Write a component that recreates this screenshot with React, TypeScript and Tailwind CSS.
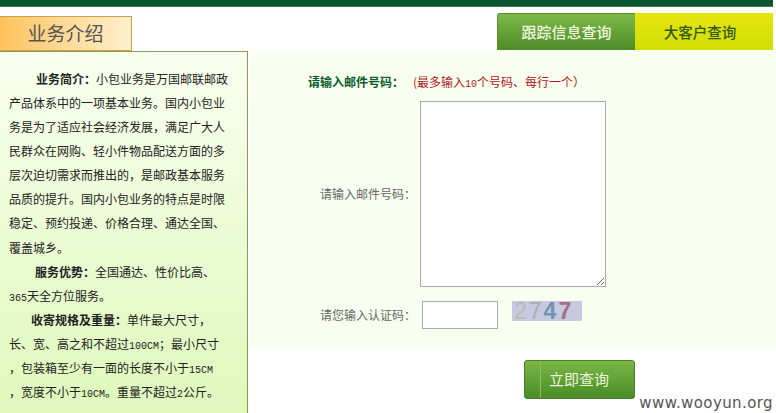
const mono = "font-['Liberation_Mono',monospace] text-[10px] leading-none";

function N({ children }: { children: string }) {
  return <span className={mono}>{children}</span>;
}

const Line = ({ children }: { children: React.ReactNode }) => (
  <div className="h-[24.08px] whitespace-nowrap">{children}</div>
);

export default function App() {
  return (
    <div lang="zh-CN" className="relative w-[776px] h-[413px] overflow-hidden bg-white font-['Noto_Sans_CJK_SC',sans-serif] text-[12px]">
      <div className="h-[7px] mr-[3px] bg-[#0b5530] border-b border-[#3d7d55]" />
      <div className="flex h-[406px]">
        <div className="w-[248px] shrink-0 flex flex-col">
          <div className="shrink-0 mt-[9px] w-[132px] h-[35px] flex items-center justify-center border-t border-r border-b border-[#c9a24a] bg-gradient-to-r from-[#fdc35a] to-[#fff0cc] text-[19px] text-[#555555]">
            业务介绍
          </div>
          <div className="shrink-0 h-[400px] pl-[9px] pt-[15px] border-t border-r border-[#8d9c4c] bg-gradient-to-b from-[#f9ffef] to-[#dcf7b5] leading-[24.08px] text-[#222222]">
            <Line><span className="pl-[27px]"><b>业务简介：</b>小包业务是万国邮联邮政</span></Line>
            <Line>产品体系中的一项基本业务。国内小包业</Line>
            <Line>务是为了适应社会经济发展，满足广大人</Line>
            <Line>民群众在网购、轻小件物品配送方面的多</Line>
            <Line>层次迫切需求而推出的，是邮政基本服务</Line>
            <Line>品质的提升。国内小包业务的特点是时限</Line>
            <Line>稳定、预约投递、价格合理、通达全国、</Line>
            <Line>覆盖城乡。</Line>
            <Line><span className="pl-[26px]"><b>服务优势：</b>全国通达、性价比高、</span></Line>
            <Line><N>365</N>天全方位服务。</Line>
            <Line><span className="pl-[22px]"><b>收寄规格及重量：</b>单件最大尺寸，</span></Line>
            <Line>长、宽、高之和不超过<N>100CM</N>；最小尺寸</Line>
            <Line>，包装箱至少有一面的长度不小于<N>15CM</N></Line>
            <Line>，宽度不小于<N>10CM</N>。重量不超过<N>2</N>公斤。</Line>
          </div>
        </div>
        <div className="flex-1 min-w-0 pl-[2px] flex flex-col">
          <div className="shrink-0 h-[37px] mt-[6px] flex justify-end pr-[3px]">
            <div className="w-[138px] flex items-center justify-center rounded-tl-[3px] border-l border-t border-[#5b8f2e] bg-gradient-to-b from-[#7db84a] to-[#4c8c26] text-[15px] font-medium text-[#eef5dc]">
              跟踪信息查询
            </div>
            <div className="w-[138px] flex items-center justify-center pr-[8px] bg-gradient-to-b from-[#e6e60f] to-[#d2dc05] text-[14.5px] font-medium text-[#2f5a10]">
              大客户查询
            </div>
          </div>
          <div className="shrink-0 h-[299px] bg-[#f9fff0]">
            <div className="h-[51px] pl-[58px] pt-[24px] flex items-start gap-[9px] leading-[16px]">
              <span className="font-bold text-[#0c5c2c]">请输入邮件号码：</span>
              <span className="text-[#b01818]">(最多输入<N>10</N>个号码、每行一个）</span>
            </div>
            <div className="flex items-center">
              <span className="w-[166px] text-right text-[#666666]">请输入邮件号码：</span>
              <textarea className="ml-[4px] block w-[186px] h-[186px] border border-[#a9a9a9] bg-white" />
            </div>
            <div className="mt-[14px] flex items-start">
              <span className="w-[166px] h-[28px] flex items-center justify-end text-[#666666]">请您输入认证码：</span>
              <input className="ml-[6px] w-[76px] h-[28px] border border-[#a9a9a9] bg-white" />
              <div className="ml-[14px] w-[70px] h-[20px] pl-[2px] bg-[#c8c8de] flex items-center font-['Liberation_Sans',sans-serif] text-[23px] leading-[20px] tracking-[2px]">
                <span className="text-[#b4bcb4]">2</span>
                <span className="text-[#a0b0b8]">7</span>
                <span className="text-[#6f94b4] font-bold">4</span>
                <span className="text-[#a0708c] font-bold">7</span>
              </div>
            </div>
          </div>
          <div className="shrink-0 pt-[11px] pl-[274px]">
            <div className="w-[111px] h-[39px] flex items-stretch justify-between pr-[25px] rounded-[3px] border border-[#4d7d2c] bg-gradient-to-b from-[#79b846] to-[#4a8c26]">
              <div className="w-[16px] border-r border-[#8cc060]" />
              <span className="self-center text-[15px] text-[#eef5dc]">立即查询</span>
            </div>
          </div>
        </div>
      </div>
      <div className="absolute right-[3px] bottom-[2px] font-['DejaVu_Sans',sans-serif] text-[15px] leading-[16px] text-[#555555] tracking-[0.4px]">
        www.wooyun.org
      </div>
    </div>
  );
}
